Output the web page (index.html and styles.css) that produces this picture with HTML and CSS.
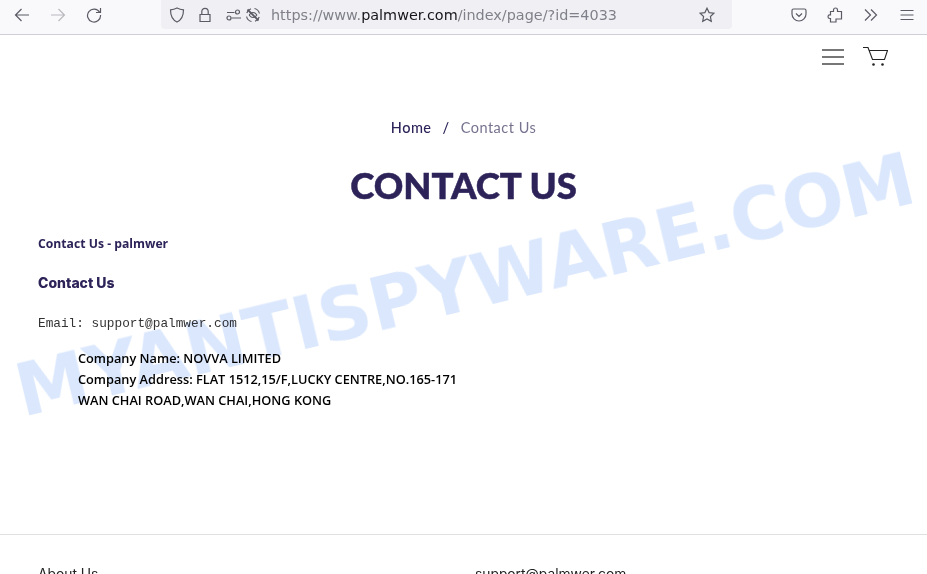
FILE: index.html
```html
<!DOCTYPE html>
<html lang="en">
<head>
  <meta charset="UTF-8">
  <title>Contact Us - palmwer</title>
  <link rel="stylesheet" href="styles.css">
</head>
<body>
<div class="toolbar">
  <div class="nav-btns">
    <svg class="icon" viewBox="0 0 16 16"><path d="M15 8H1.500M7.500 2L1.500 8l6 6"/></svg>
    <svg class="icon dim" viewBox="0 0 16 16"><path d="M1 8h13.500M8.500 2l6 6-6 6"/></svg>
    <svg class="icon" viewBox="0 0 16 16"><path d="M13.600 5.200A6.500 6.500 0 1 0 14.500 8M14.500 1v4.500H10"/></svg>
  </div>
  <div class="urlbar">
    <svg class="icon shield" viewBox="0 0 16 16"><path d="M8 1C6 2 4 2.600 1.500 2.800c0 6 1.500 10 6.500 12.200 5-2.200 6.500-6.200 6.500-12.200C12 2.600 10 2 8 1z"/></svg>
    <svg class="icon lock" viewBox="0 0 16 16"><path d="M3 7.500h10v7H3zM4.800 7.500V4.500a3.200 3.200 0 0 1 6.400 0v3"/></svg>
    <svg class="icon perms" viewBox="0 0 16 16"><path d="M1 5.500h7.500M5.500 11H15"/><circle cx="11.500" cy="5" r="2"/><circle cx="3" cy="11" r="2"/></svg>
    <svg class="icon eye" viewBox="0 0 16 16"><path d="M6 1.800A6.500 6.500 0 0 0 1.800 6M1.600 9.500a6.500 6.500 0 0 0 4.900 5M10 14.200A6.500 6.500 0 0 0 14.200 10M14.400 6.500a6.500 6.500 0 0 0-4.900-5M4.500 7.500c1-1.300 2.200-2 3.500-2 1.500 0 2.800.8 3.800 2.500-1 1.700-2.300 2.500-3.800 2.500-1.300 0-2.500-.7-3.500-2z"/><path class="slash" d="M2.500 2.500l11 11"/></svg>
    <div class="url">https://www.<b>palmwer.com</b>/index/page/?id=4033</div>
    <svg class="icon star" viewBox="0 0 16 16"><path d="M8 1.200l2.100 4.400 4.800.6-3.500 3.300.9 4.800L8 12l-4.300 2.300.9-4.800L1.100 6.200l4.800-.6z"/></svg>
  </div>
  <div class="tool-btns">
    <svg class="icon" viewBox="0 0 16 16"><path d="M2.500 2h11A1.500 1.500 0 0 1 15 3.500V7A7 7 0 0 1 1 7V3.500A1.500 1.500 0 0 1 2.500 2zM5 6.500l3 3 3-3"/></svg>
    <svg class="icon" viewBox="0 0 16 16"><path d="M6.500 4.500V3a2 2 0 0 1 4 0v1.500h4V12H9v3H3.500v-3.500H2.800a1.800 1.800 0 0 1 0-3.600h.7V4.500z"/></svg>
    <svg class="icon" viewBox="0 0 16 16"><path d="M2 2.500L7.500 8 2 13.500M8 2.500L13.500 8 8 13.500"/></svg>
    <svg class="icon" viewBox="0 0 16 16"><path d="M1.500 3.500h13M1.500 8h13M1.500 12.500h13"/></svg>
  </div>
</div>

<div class="page">
  <header class="site-header">
    <svg class="burger" viewBox="0 0 22 16"><path d="M0 1h22M0 8h22M0 15h22"/></svg>
    <svg class="cart" viewBox="0 0 25 20"><path d="M0 .5h5L9.500 12.500h12L24.500 3.500H5.800"/><circle cx="10.500" cy="17.500" r="1.300"/><circle cx="19.500" cy="17.500" r="1.300"/></svg>
  </header>

  <nav class="crumbs"><a>Home</a><span class="sep">/</span><span class="current">Contact Us</span></nav>
  <h1 class="page-title">CONTACT US</h1>

  <main class="content">
    <p class="lead">Contact Us - palmwer</p>
    <h3 class="sub">Contact Us</h3>
    <p class="email">Email: support@palmwer.com</p>
    <div class="company">
      Company Name: NOVVA LIMITED<br>
      Company Address: FLAT 1512,15/F,LUCKY CENTRE,NO.165-171<br>
      WAN CHAI ROAD,WAN CHAI,HONG KONG
    </div>
  </main>

  <footer class="site-footer">
    <div class="foot-col">About Us</div>
    <div class="foot-col">support@palmwer.com</div>
  </footer>
</div>

<div class="watermark">MYANTISPYWARE.COM</div>
</body>
</html>
```

FILE: styles.css
```css
html, body {
  margin: 0;
  height: 100%;
  overflow: hidden;
  background: #fff;
}
body {
  position: relative;
  font-family: "Open Sans", sans-serif;
}

/* browser chrome */
.toolbar {
  display: flex;
  height: 34px;
  background: #f9f9fb;
  border-bottom: 1px solid #cfcfd8;
  color: #5b5b66;
}
.icon {
  width: 16px;
  height: 16px;
  fill: none;
  stroke: currentColor;
  stroke-width: 1.2;
  flex: none;
}
.dim {
  opacity: .4;
}
.slash {
  stroke-width: 1.800;
}
.nav-btns {
  display: flex;
  align-items: center;
  gap: 20px;
  width: 161px;
  padding: 0 0 4px 14px;
  box-sizing: border-box;
}
.urlbar {
  display: flex;
  align-items: center;
  width: 571px;
  height: 29px;
  background: #f0f0f4;
  border-radius: 0 0 4px 4px;
  box-sizing: border-box;
  padding-left: 8px;
}
.lock {
  margin-left: 12px;
}
.perms {
  margin-left: 13px;
}
.eye {
  margin-left: 3px;
}
.url {
  margin-left: 10px;
  width: 428px;
  font: 14.400px "DejaVu Sans", sans-serif;
  color: #80808a;
  white-space: nowrap;
}
.url b {
  font-weight: normal;
  color: #15141a;
}
.tool-btns {
  display: flex;
  align-items: center;
  gap: 20px;
  margin-left: 59px;
  padding-bottom: 5px;
}

/* page */
.site-header {
  display: flex;
  justify-content: flex-end;
  align-items: center;
  gap: 19px;
  height: 43px;
  padding-right: 39px;
}
.burger {
  width: 22px;
  height: 16px;
  fill: none;
  stroke: #777;
  stroke-width: 1.800;
}
.cart {
  width: 25px;
  height: 20px;
  fill: none;
  stroke: #222;
  stroke-width: 1.100;
}
.cart circle {
  fill: #222;
  stroke: none;
}
.crumbs {
  margin-top: 38px;
  text-align: center;
  font: 500 14.500px/24px Lato, sans-serif;
  letter-spacing: .5px;
  color: #2d2359;
}
.crumbs .sep {
  margin: 0 11px;
}
.crumbs .current {
  color: #77738f;
  font-weight: 400;
}
.page-title {
  margin: 23px 0 0;
  text-align: center;
  font: 900 36.500px/44px Lato, sans-serif;
  -webkit-text-stroke: .5px #2d2359;
  color: #2d2359;
}
.content {
  height: 327px;
  box-sizing: border-box;
  padding: 27px 38px 0;
}
.lead {
  margin: 0;
  font: 700 12.200px/20px "Open Sans", sans-serif;
  color: #2d2359;
}
.sub {
  margin: 19px 0 0;
  font: 800 14px/20px Inter, sans-serif;
  color: #2d2359;
}
.email {
  margin: 21px 0 0;
  font: 12.750px/20px "Liberation Mono", monospace;
  color: #333;
}
.company {
  margin: 14px 0 0 40px;
  font: 600 12.750px/21px "Open Sans", sans-serif;
  color: #000;
}
.site-footer {
  display: flex;
  border-top: 1px solid #e0e0e0;
  padding: 29px 38px 0;
  font: 13.800px/20px Inter, sans-serif;
  color: #222;
}
.foot-col {
  flex: none;
  width: 437px;
}

/* watermark stamped across the shot */
.watermark {
  position: absolute;
  left: -50px;
  top: 240px;
  width: 1030px;
  text-align: center;
  font: 700 72.500px/90px "DejaVu Sans", sans-serif;
  white-space: nowrap;
  color: #dae7fd;
  transform: rotate(-13.500deg);
  filter: blur(.4px);
  mix-blend-mode: multiply;
  pointer-events: none;
}
```
